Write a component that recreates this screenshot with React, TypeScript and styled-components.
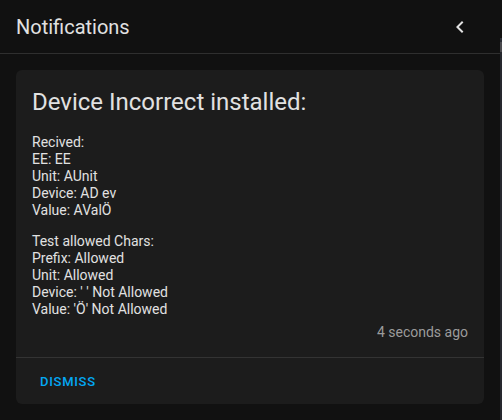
import React from "react";
import styled, { createGlobalStyle } from "styled-components";

const Global = createGlobalStyle`
  html, body { margin: 0; padding: 0; background: #111111; }
  body { font-family: Roboto, "Noto Sans", sans-serif; -webkit-font-smoothing: antialiased; }
  * { box-sizing: border-box; }
`;

const Screen = styled.div`
  display: flex;
  width: 502px;
  height: 420px;
  overflow: hidden;
  background: #111111;
`;

const Drawer = styled.div`
  width: 500px;
  display: flex;
  flex-direction: column;
  background: #111111;
`;

const Behind = styled.div`
  width: 2px;
  display: flex;
  flex-direction: column;
  padding-top: 38px;
`;

const BehindBar = styled.div<{ $h: number; $c: string }>`
  height: ${(p) => p.$h}px;
  background: ${(p) => p.$c};
`;

const Header = styled.header`
  height: 54px;
  display: flex;
  align-items: center;
  justify-content: space-between;
  padding: 0 16px;
  border-bottom: 1px solid #2f2f2f;
`;

const Title = styled.h1`
  margin: 0;
  font-size: 20px;
  font-weight: 400;
  color: #e1e1e1;
  letter-spacing: 0;
`;

const IconButton = styled.button`
  width: 40px;
  height: 40px;
  margin-right: 4px;
  display: flex;
  align-items: center;
  justify-content: center;
  background: none;
  border: none;
  padding: 0;
  color: #e1e1e1;
`;

const Card = styled.div`
  margin: 16px 16px 0;
  background: #1c1c1c;
  border-radius: 6px;
  display: flex;
  flex-direction: column;
`;

const Content = styled.div`
  padding: 16px 16px 16px;
  color: #e1e1e1;
`;

const CardTitle = styled.div`
  font-size: 24px;
  line-height: 32px;
  font-weight: 400;
  color: #e1e1e1;
  margin-bottom: 16px;
`;

const Para = styled.p`
  margin: 0 0 14px;
  font-size: 14px;
  line-height: 17px;
  &:last-of-type { margin-bottom: 0; }
`;

const Time = styled.div`
  margin-top: 6px;
  text-align: right;
  font-size: 14px;
  line-height: 17px;
  color: #9b9b9b;
`;

const Actions = styled.div`
  border-top: 1px solid #333333;
  padding: 5px 16px;
  display: flex;
`;

const TextButton = styled.button`
  height: 36px;
  padding: 0 8px;
  background: none;
  border: none;
  font-family: Roboto, sans-serif;
  font-size: 13px;
  font-weight: 500;
  letter-spacing: 0.7px;
  text-transform: uppercase;
  color: #03a9f4;
`;

const ChevronLeft = () => (
  <svg width="24" height="24" viewBox="0 0 24 24" fill="currentColor">
    <path d="M15.41,16.58L10.83,12L15.41,7.41L14,6L8,12L14,18L15.41,16.58Z" />
  </svg>
);

export default function App() {
  return (
    <Screen>
      <Global />
      <Drawer>
        <Header>
          <Title>Notifications</Title>
          <IconButton aria-label="close">
            <ChevronLeft />
          </IconButton>
        </Header>
        <Card>
          <Content>
            <CardTitle>Device Incorrect installed:</CardTitle>
            <Para>
              Recived:<br />
              EE: EE<br />
              Unit: AUnit<br />
              Device: AD ev<br />
              Value: AValÖ
            </Para>
            <Para>
              Test allowed Chars:<br />
              Prefix: Allowed<br />
              Unit: Allowed<br />
              Device: ' ' Not Allowed<br />
              Value: 'Ö' Not Allowed
            </Para>
            <Time>4 seconds ago</Time>
          </Content>
          <Actions>
            <TextButton>Dismiss</TextButton>
          </Actions>
        </Card>
      </Drawer>
      <Behind>
        <BehindBar $h={4} $c="#2a2d35" />
        <BehindBar $h={10} $c="#4a4a4e" />
        <BehindBar $h={368} $c="#26282e" />
      </Behind>
    </Screen>
  );
}
